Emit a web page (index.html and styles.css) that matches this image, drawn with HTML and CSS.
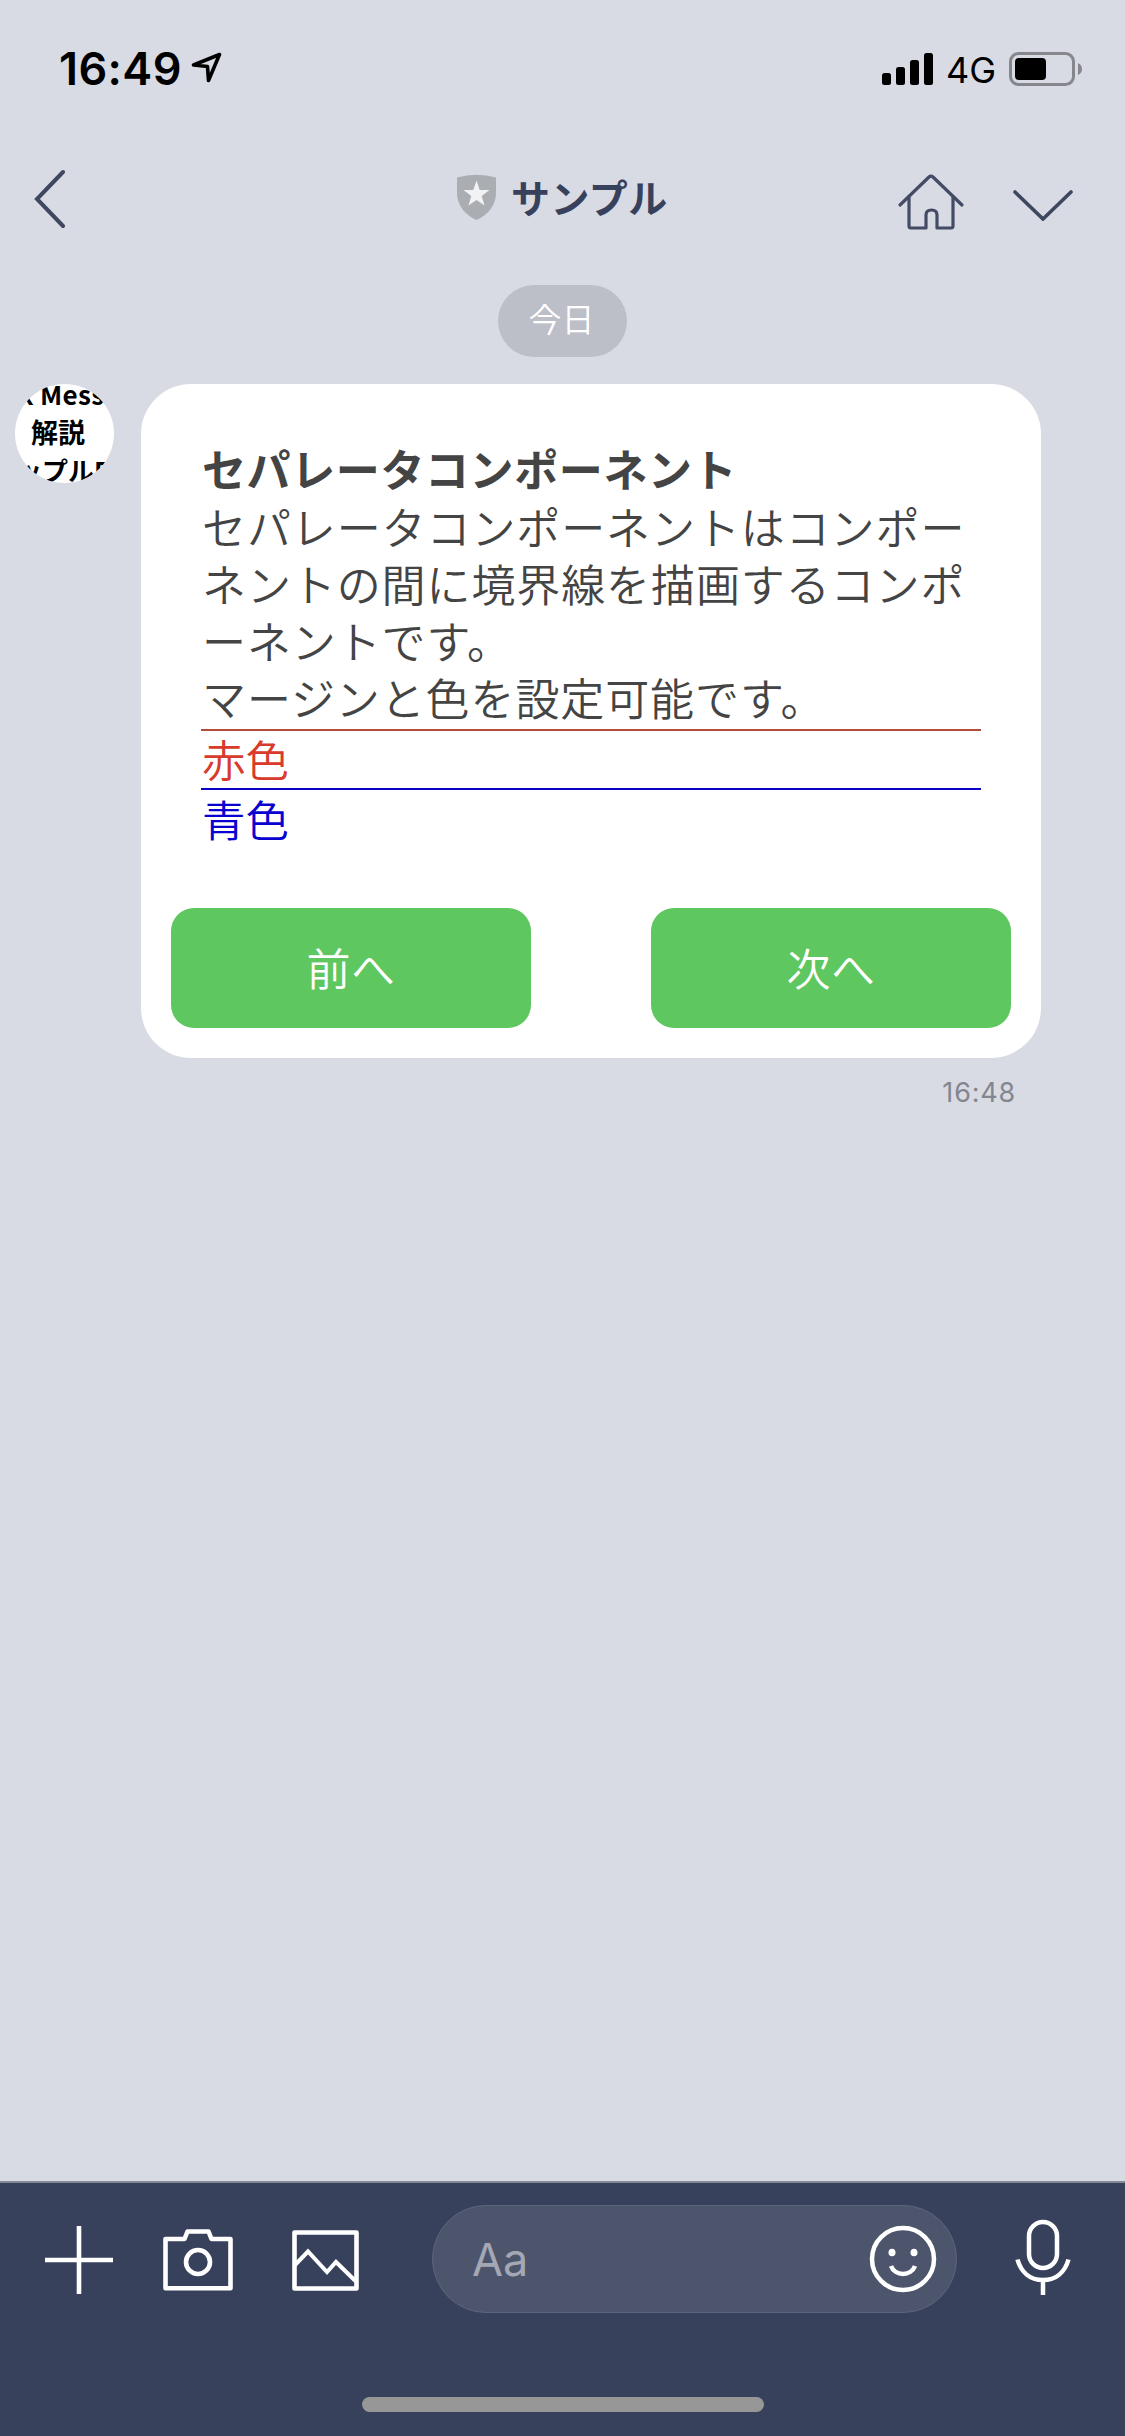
FILE: index.html
```html
<!DOCTYPE html>
<html lang="ja">
<head>
<meta charset="utf-8">
<title>サンプル</title>
<link rel="stylesheet" href="styles.css">
</head>
<body>
<div class="screen">
  <div class="status">
    <span class="clock">16:49</span>
    <svg class="location" width="34" height="34" viewBox="0 0 34 34"><path d="M29.500 3.500 3.500 14 17.500 15.500 18.500 29.500Z" fill="none" stroke="#000" stroke-width="3.600" stroke-linejoin="round"/></svg>
    <svg class="signal" width="51" height="32" viewBox="0 0 51 32"><rect y="20" width="9" height="12" rx="2.5"/><rect x="14" y="14" width="9" height="18" rx="2.5"/><rect x="28" y="7" width="9" height="25" rx="2.5"/><rect x="42" width="9" height="32" rx="2.5"/></svg>
    <span class="network">4G</span>
    <svg class="battery" width="74" height="34" viewBox="0 0 74 34"><rect x="1.5" y="1.5" width="63" height="31" rx="8" fill="none" stroke="#85878c" stroke-width="3"/><rect x="6" y="6" width="31" height="22" rx="4"/><path d="M69 11Q73 13 73 17T69 23Z" fill="#85878c"/></svg>
  </div>
  <header class="header">
    <svg class="back" width="32" height="62" viewBox="0 0 32 62"><path d="M30 4 4 31 30 58" fill="none" stroke="#3f4760" stroke-width="4" stroke-linecap="round"/></svg>
    <div class="room">
      <svg width="39" height="46" viewBox="0 0 39 46"><path d="M0 3.5Q19.500-2 39 3.500V19C39 31 31 41 19.500 46 8 41 0 31 0 19Z" fill="#aaadb1"/><path d="M19.500 6.500 22.700 16H32.500L24.700 22 27.500 31.500 19.500 26 11.500 31.500 14.300 22 6.500 16H16.300Z" fill="#f2f2f4"/></svg>
      <h1>サンプル</h1>
    </div>
    <svg class="home" width="68" height="58" viewBox="0 0 68 58"><g fill="none" stroke="#444b64" stroke-width="3.200" stroke-linecap="round" stroke-linejoin="round"><path d="M3 32 32 4Q34 2 36 4L65 32"/><path d="M12 24V53Q12 55 14 55H29V42Q29 37 34.500 37T40 42V55H54Q56 55 56 53V24"/></g></svg>
    <svg class="down" width="62" height="32" viewBox="0 0 62 32"><path d="M3 3 31 30 59 3" fill="none" stroke="#3f4760" stroke-width="3.600" stroke-linecap="round"/></svg>
  </header>
  <main class="chat">
    <div class="day">今日</div>
    <div class="message">
      <div class="avatar"><span class="top">x Mess</span><span class="middle">解説</span><span class="bottom">ップルF</span></div>
      <div class="column">
        <article class="card">
          <div class="body">
            <h2>セパレータコンポーネント</h2>
            <p>セパレータコンポーネントはコンポー<br>ネントの間に境界線を描画するコンポ<br>ーネントです。<br>マージンと色を設定可能です。</p>
            <hr class="line-red">
            <p class="red">赤色</p>
            <hr class="line-blue">
            <p class="blue">青色</p>
          </div>
          <div class="actions"><button>前へ</button><button>次へ</button></div>
        </article>
        <time>16:48</time>
      </div>
    </div>
  </main>
  <footer class="toolbar">
    <div class="tools">
      <svg class="plus" width="68" height="68" viewBox="0 0 68 68"><path d="M34 0V68M0 34H68" stroke="#fff" stroke-width="4.600"/></svg>
      <svg class="camera" width="70" height="62" viewBox="0 0 70 62"><g fill="none" stroke="#fff" stroke-width="4.600" stroke-linejoin="round"><path d="M2.500 10H21.500L24.500 2.500H45.500L48.500 10H67.500V59.300H2.500Z"/><circle cx="35" cy="33" r="12"/></g></svg>
      <svg class="picture" width="67" height="61" viewBox="0 0 67 61"><g fill="none" stroke="#fff" stroke-width="4.600" stroke-linejoin="round"><path d="M2.500 2.500H64.500V58.500H2.500Z"/><path d="M2.500 35.500 16 21.500 35 42 44 32 64 51.500" stroke-width="4" stroke-linejoin="miter"/></g></svg>
      <div class="field">
        <span>Aa</span>
        <svg width="68" height="68" viewBox="0 0 68 68"><g fill="none" stroke="#fff" stroke-width="4.500"><circle cx="34" cy="34" r="31"/><path d="M22 41C26 51.500 42 51.500 46 41"/></g><g fill="#fff"><ellipse cx="23" cy="27.500" rx="3.500" ry="3.800"/><ellipse cx="45" cy="27.500" rx="3.500" ry="3.800"/></g></svg>
      </div>
      <svg class="mic" width="58" height="78" viewBox="0 0 58 78"><g fill="none" stroke="#fff" stroke-width="4.500"><rect x="15" y="4" width="28" height="46" rx="14"/><path d="M3.500 41.500C7 54 16 62 29 62S51 54 54.500 41.500M29 62V77"/></g></svg>
    </div>
    <div class="indicator"></div>
  </footer>
</div>
</body>
</html>
```
FILE: styles.css
```css
* { box-sizing: border-box; margin: 0; padding: 0; }
body {
  width: 1125px;
  background: #d8dbe4;
  font-family: Inter, "Noto Sans CJK JP", sans-serif;
}
svg { display: block; flex: none; }
.screen { display: flex; flex-direction: column; height: 2436px; }

.status { display: flex; height: 132px; padding-left: 59px; }
.clock { width: 131px; margin-top: 42px; font-size: 45px; font-weight: 600; line-height: 54px; letter-spacing: 0.4px; }
.location { margin-top: 51px; }
.signal { margin: 53px 0 0 658px; }
.network { width: 62px; margin: 48px 0 0 13px; font-size: 36px; line-height: 44px; }
.battery { margin: 52px 0 0 1px; }

.header { display: flex; height: 153px; padding-left: 33px; }
.back { margin-top: 36px; }
.room { display: flex; gap: 15px; width: 220px; margin: 42px 0 0 392px; }
.room h1 { font-size: 39px; line-height: 49px; letter-spacing: 0.5px; color: #38415c; }
.home { margin: 41px 0 0 220px; }
.down { margin: 57px 0 0 47px; }

.chat { display: flex; flex-direction: column; flex: 1; }
.day {
  width: 129px; height: 72px; margin-left: 498px; padding-right: 2px;
  border-radius: 36px; background: #bcbfc7; color: #fff;
  font-size: 33px; font-weight: 350; line-height: 70px; text-align: center;
}
.message { display: flex; margin-top: 27px; padding-left: 15px; gap: 27px; }
.avatar {
  display: flex; flex-direction: column; flex: none;
  width: 99px; height: 99px; overflow: hidden; border-radius: 50%;
  background: #fff; font: 700 26px/38px "Noto Sans CJK JP", sans-serif; white-space: nowrap;
}
.avatar .top { margin: -9px 0 0 4px; letter-spacing: 0.3px; }
.avatar .middle { margin-left: 16px; font-size: 27px; }
.avatar .bottom { margin-left: 1px; }
.column { display: flex; flex-direction: column; width: 900px; }
.card { height: 674px; border-radius: 50px; background: #fff; color: #444; }
.body { padding: 60px 60px 61px; font-size: 44px; line-height: 57px; letter-spacing: 0.9px; }
.body h2 { padding-left: 1px; font-size: 44px; line-height: 54px; margin-bottom: 3px; letter-spacing: 0.6px; }
.body p { padding-left: 1px; font-weight: 350; white-space: nowrap; }
.body hr { height: 2px; border: 0; }
.body .line-red { background: #b44c3c; }
.body .line-blue { background: #0a00c0; }
.body .red, .body .blue { height: 57px; font-size: 43.5px; line-height: 60px; letter-spacing: 0; }
.body .red { color: #d83a2c; }
.body .blue { line-height: 62px; color: #0a00d0; }
.actions { display: flex; justify-content: space-between; padding: 0 30px; }
.actions button {
  width: 360px; height: 120px; padding-bottom: 3px; border: 0; border-radius: 23px;
  background: #5ec75f; color: #fff; font: 350 44px/116px "Noto Sans CJK JP", sans-serif; letter-spacing: 0.5px;
}
time { align-self: flex-end; margin: 17px 25px 0 0; font-size: 27px; line-height: 35px; letter-spacing: 0.8px; color: #84868e; }

.toolbar { display: flex; flex-direction: column; height: 255px; border-top: 2px solid #858994; background: #38415c; }
.tools { display: flex; align-items: flex-start; height: 214px; padding: 22px 0 0 45px; }
.plus { margin-top: 21px; }
.camera { margin: 24px 0 0 50px; }
.picture { margin: 25px 0 0 59px; }
.field {
  display: flex; align-items: center; justify-content: space-between;
  width: 525px; height: 108px; margin-left: 73px; padding: 0 19px 0 39px;
  border: 1px solid #5e647b; border-radius: 54px; background: #4d556c;
}
.field span { color: #a5a8b4; font-size: 45px; }
.mic { margin: 13px 0 0 57px; }
.indicator { width: 402px; height: 15px; margin-left: 362px; border-radius: 8px; background: #979797; }
```
